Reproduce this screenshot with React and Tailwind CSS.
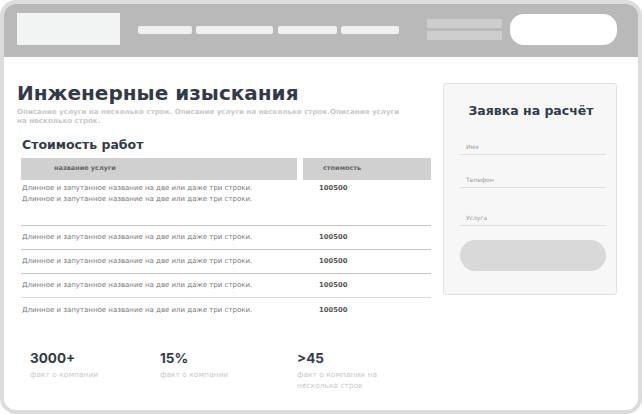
export default function App() {
  const rows = [1, 2, 3, 4];
  const name = "Длинное и запутанное название на две или даже три строки.";
  return (
    <div className="w-[642px] h-[414px] bg-white" style={{ fontFamily: '"DejaVu Sans", sans-serif' }}>
      <div className="w-full h-full border-4 border-[#dcdcdc] rounded-[16px] overflow-hidden flex flex-col">
        {/* header */}
        <div className="h-[53px] shrink-0 bg-[#b9b9b9] flex items-center pl-[13px] pb-[3px]">
          <div className="w-[103px] h-[32px] bg-[#f2f3f3]" />
          <div className="flex ml-[18px] gap-[4px] mt-[1px]">
            <div className="w-[54px] h-[8px] rounded-[2px] bg-[#f0f0f0]" />
            <div className="w-[77px] h-[8px] rounded-[2px] bg-[#f0f0f0]" />
            <div className="w-[59px] h-[8px] rounded-[2px] bg-[#f0f0f0] ml-[1px]" />
            <div className="w-[58px] h-[8px] rounded-[2px] bg-[#f0f0f0]" />
          </div>
          <div className="flex flex-col gap-[3px] ml-[28px]">
            <div className="w-[75px] h-[9px] bg-[#cdcdcd]" />
            <div className="w-[75px] h-[9px] bg-[#cdcdcd]" />
          </div>
          <div className="w-[107px] h-[31px] rounded-[14px] bg-white ml-[8px]" />
        </div>

        {/* body */}
        <div className="flex flex-1">
          <div className="w-[414px] ml-[13px] pt-[24px] flex flex-col">
            <h1 className="text-[20px] leading-[24px] font-bold text-[#333a47]">Инженерные изыскания</h1>
            <p className="w-[410px] mt-[2px] text-[7.1px] leading-[9px] font-bold text-[#c8c8c8]">
              Описание услуги на несколько строк. Описание услуги на несколько строк.Описание услуги
              <br />
              на несколько строк.
            </p>
            <h2 className="ml-[5px] mt-[12px] text-[12.5px] leading-[16px] font-bold text-[#333a47]">Стоимость работ</h2>
            <div className="ml-[4px] mt-[5px] w-[410px] flex flex-col">
              <div className="flex gap-[6px] h-[22px]">
                <div className="w-[276px] bg-[#d0d0d0] flex items-center pl-[33px] text-[6.5px] font-bold text-[#666]">название услуги</div>
                <div className="flex-1 bg-[#d0d0d0] flex items-center pl-[20px] text-[6.5px] font-bold text-[#666]">стоимость</div>
              </div>
              <div className="flex h-[45px] pt-[3px]">
                <div className="w-[298px] pl-[1px] text-[7px] leading-[11px] text-[#777]">
                  {name}
                  <br />
                  {name}
                </div>
                <div className="text-[6.8px] leading-[11px] font-bold text-[#555]">100500</div>
              </div>
              {rows.map((r) => (
                <div
                  key={r}
                  className={`flex items-center h-[24px] border-t ${r === 4 ? "border-[#dddddd] h-[26px]" : "border-[#c4c4c4]"}`}
                >
                  <div className="w-[298px] pl-[1px] text-[7px] leading-[11px] text-[#777]">{name}</div>
                  <div className="text-[6.8px] leading-[11px] font-bold text-[#555]">100500</div>
                </div>
              ))}
            </div>
            <div className="flex ml-[13px] mt-[27px]">
              <div className="w-[130px]">
                <div className="text-[13.5px] leading-[16px] font-bold text-[#333a47]" style={{ fontFamily: "Inter, sans-serif" }}>3000+</div>
                <div className="mt-[3px] text-[7.5px] leading-[11px] text-[#c9c9c9]">факт о компании</div>
              </div>
              <div className="w-[137px]">
                <div className="text-[13.5px] leading-[16px] font-bold text-[#333a47]" style={{ fontFamily: "Inter, sans-serif" }}>15%</div>
                <div className="mt-[3px] text-[7.5px] leading-[11px] text-[#c9c9c9]">факт о компании</div>
              </div>
              <div className="w-[90px]">
                <div className="text-[13.5px] leading-[16px] font-bold text-[#333a47]" style={{ fontFamily: "Inter, sans-serif" }}>&gt;45</div>
                <div className="mt-[3px] text-[7.5px] leading-[11px] text-[#c9c9c9]">факт о компании на несколько строк</div>
              </div>
            </div>
          </div>

          {/* form card */}
          <div className="ml-[12px] mt-[26px] w-[174px] h-[212px] bg-[#f7f7f7] border border-[#e2e2e2] rounded-[3px] flex flex-col pl-[16px] pr-[10px]">
            <div className="mt-[19px] text-center pr-[4px] text-[12.5px] leading-[15px] font-bold text-[#333a47]">Заявка на расчёт</div>
            <div className="mt-[25px] border-b border-[#e0e0e0] pl-[6px] pb-[3px] text-[6px] leading-[8px] text-[#999]">Имя</div>
            <div className="mt-[21px] border-b border-[#e0e0e0] pl-[6px] pb-[3px] text-[6px] leading-[8px] text-[#999]">Телефон</div>
            <div className="mt-[26px] border-b border-[#e0e0e0] pl-[6px] pb-[3px] text-[6px] leading-[8px] text-[#999]">Услуга</div>
            <div className="mt-[14px] h-[31px] rounded-full bg-[#d9d9d9]" />
          </div>
        </div>
      </div>
    </div>
  );
}
